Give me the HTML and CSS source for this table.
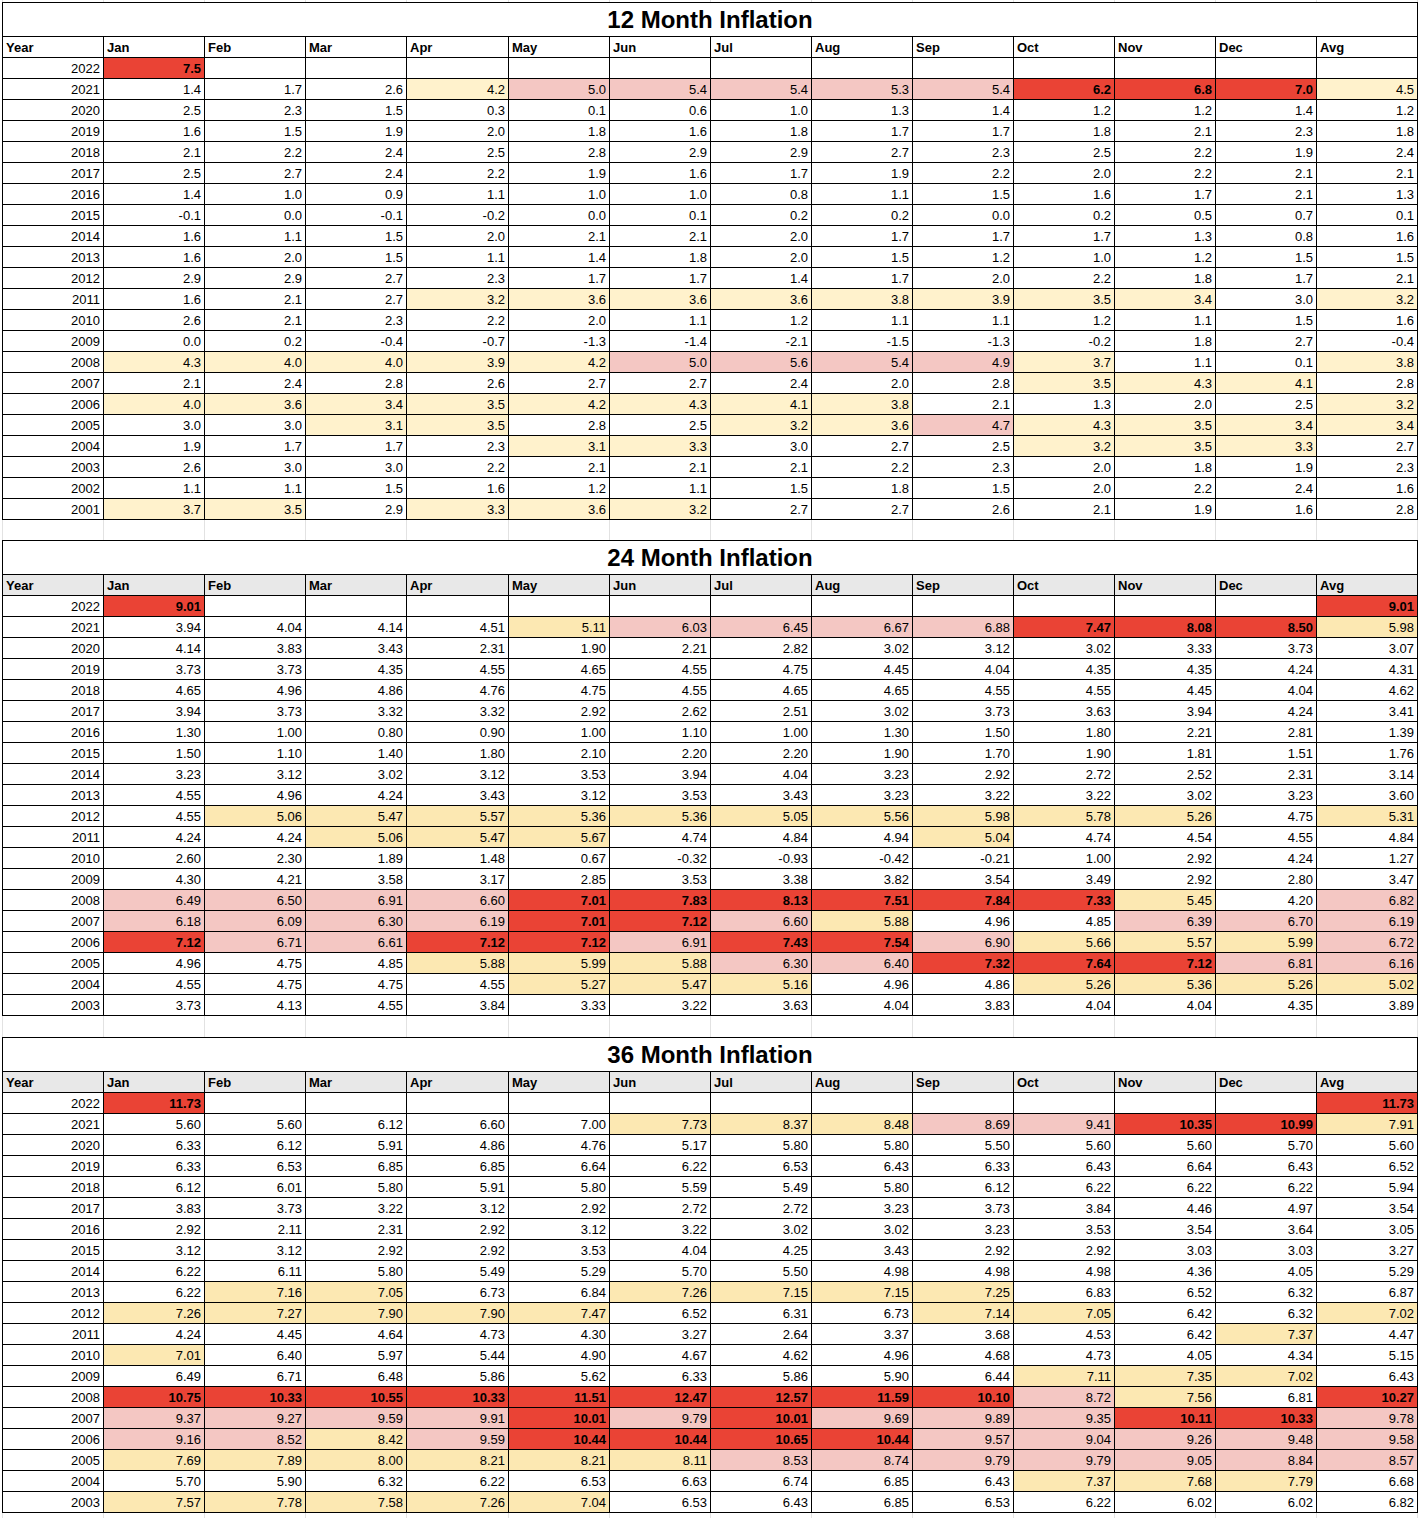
FILE: index.html
```html
<!DOCTYPE html>
<html lang="en">
<head>
<meta charset="utf-8">
<title>Inflation</title>
<link rel="stylesheet" href="styles.css">
</head>
<body>
<div class="sheet">
  <div class="grid gap gap-top" data-gap></div>
  <div class="grid tbl t1" id="t1"></div>
  <div class="grid gap gap-mid" data-gap></div>
  <div class="grid tbl t2" id="t2"></div>
  <div class="grid gap gap-mid gap-wide" data-gap></div>
  <div class="grid tbl t3" id="t3"></div>
  <div class="grid gap gap-end" data-gap></div>
</div>
<script src="script.js"></script>
</body>
</html>
```

FILE: styles.css
```css
body {
  margin: 0;
  background: #fff;
  color: #000;
  font-family: "Liberation Sans", Arial, sans-serif;
}

.sheet {
  padding-left: 2px;
}

.grid {
  display: grid;
  grid-template-columns: 101px 101px 101px 101px 102px repeat(9, 101px);
  width: max-content;
}

.gap {
  border-left: 1px solid #e2e2e2;
}

.gap > div {
  border-right: 1px solid #e2e2e2;
}

.gap-top > div { height: 2px; }
.gap-mid > div { height: 20px; }
.gap-wide > div { height: 21px; }
.gap-end > div { height: 8px; }

.tbl {
  border-left: 1px solid #000;
  border-top: 1px solid #000;
}

.cell {
  box-sizing: border-box;
  height: 21px;
  border-right: 1px solid #000;
  border-bottom: 1px solid #000;
  padding: 2px 3px 0;
  font-size: 13px;
  line-height: 18px;
  white-space: nowrap;
  overflow: hidden;
  text-align: right;
}

.title {
  grid-column: 1 / -1;
  box-sizing: border-box;
  height: 34px;
  border-right: 1px solid #000;
  border-bottom: 1px solid #000;
  font-size: 24px;
  font-weight: bold;
  line-height: 33px;
  text-align: center;
}

.head {
  font-weight: bold;
  text-align: left;
}

.t2 .head,
.t3 .head {
  background: #e8e8e8;
}

.red {
  background: #ea4335;
  font-weight: bold;
}

.pink {
  background: #f4c7c3;
}

.t1 .yellow {
  background: #fff2cc;
}

.t2 .yellow,
.t3 .yellow {
  background: #fce8b2;
}
```

FILE: script.js
```js
(function () {
  var heads = ["Year", "Jan", "Feb", "Mar", "Apr", "May", "Jun", "Jul", "Aug", "Sep", "Oct", "Nov", "Dec", "Avg"];

  var t1 = [
    "2022|7.5,,,,,,,,,,,,",
    "2021|1.4 1.7 2.6 4.2 5.0 5.4 5.4 5.3 5.4 6.2 6.8 7.0 4.5",
    "2020|2.5 2.3 1.5 0.3 0.1 0.6 1.0 1.3 1.4 1.2 1.2 1.4 1.2",
    "2019|1.6 1.5 1.9 2.0 1.8 1.6 1.8 1.7 1.7 1.8 2.1 2.3 1.8",
    "2018|2.1 2.2 2.4 2.5 2.8 2.9 2.9 2.7 2.3 2.5 2.2 1.9 2.4",
    "2017|2.5 2.7 2.4 2.2 1.9 1.6 1.7 1.9 2.2 2.0 2.2 2.1 2.1",
    "2016|1.4 1.0 0.9 1.1 1.0 1.0 0.8 1.1 1.5 1.6 1.7 2.1 1.3",
    "2015|-0.1 0.0 -0.1 -0.2 0.0 0.1 0.2 0.2 0.0 0.2 0.5 0.7 0.1",
    "2014|1.6 1.1 1.5 2.0 2.1 2.1 2.0 1.7 1.7 1.7 1.3 0.8 1.6",
    "2013|1.6 2.0 1.5 1.1 1.4 1.8 2.0 1.5 1.2 1.0 1.2 1.5 1.5",
    "2012|2.9 2.9 2.7 2.3 1.7 1.7 1.4 1.7 2.0 2.2 1.8 1.7 2.1",
    "2011|1.6 2.1 2.7 3.2 3.6 3.6 3.6 3.8 3.9 3.5 3.4 3.0 3.2",
    "2010|2.6 2.1 2.3 2.2 2.0 1.1 1.2 1.1 1.1 1.2 1.1 1.5 1.6",
    "2009|0.0 0.2 -0.4 -0.7 -1.3 -1.4 -2.1 -1.5 -1.3 -0.2 1.8 2.7 -0.4",
    "2008|4.3 4.0 4.0 3.9 4.2 5.0 5.6 5.4 4.9 3.7 1.1 0.1 3.8",
    "2007|2.1 2.4 2.8 2.6 2.7 2.7 2.4 2.0 2.8 3.5 4.3 4.1 2.8",
    "2006|4.0 3.6 3.4 3.5 4.2 4.3 4.1 3.8 2.1 1.3 2.0 2.5 3.2",
    "2005|3.0 3.0 3.1 3.5 2.8 2.5 3.2 3.6 4.7 4.3 3.5 3.4 3.4",
    "2004|1.9 1.7 1.7 2.3 3.1 3.3 3.0 2.7 2.5 3.2 3.5 3.3 2.7",
    "2003|2.6 3.0 3.0 2.2 2.1 2.1 2.1 2.2 2.3 2.0 1.8 1.9 2.3",
    "2002|1.1 1.1 1.5 1.6 1.2 1.1 1.5 1.8 1.5 2.0 2.2 2.4 1.6",
    "2001|3.7 3.5 2.9 3.3 3.6 3.2 2.7 2.7 2.6 2.1 1.9 1.6 2.8"
  ];

  var t2 = [
    "2022|9.01,,,,,,,,,,,,9.01",
    "2021|3.94 4.04 4.14 4.51 5.11 6.03 6.45 6.67 6.88 7.47 8.08 8.50 5.98",
    "2020|4.14 3.83 3.43 2.31 1.90 2.21 2.82 3.02 3.12 3.02 3.33 3.73 3.07",
    "2019|3.73 3.73 4.35 4.55 4.65 4.55 4.75 4.45 4.04 4.35 4.35 4.24 4.31",
    "2018|4.65 4.96 4.86 4.76 4.75 4.55 4.65 4.65 4.55 4.55 4.45 4.04 4.62",
    "2017|3.94 3.73 3.32 3.32 2.92 2.62 2.51 3.02 3.73 3.63 3.94 4.24 3.41",
    "2016|1.30 1.00 0.80 0.90 1.00 1.10 1.00 1.30 1.50 1.80 2.21 2.81 1.39",
    "2015|1.50 1.10 1.40 1.80 2.10 2.20 2.20 1.90 1.70 1.90 1.81 1.51 1.76",
    "2014|3.23 3.12 3.02 3.12 3.53 3.94 4.04 3.23 2.92 2.72 2.52 2.31 3.14",
    "2013|4.55 4.96 4.24 3.43 3.12 3.53 3.43 3.23 3.22 3.22 3.02 3.23 3.60",
    "2012|4.55 5.06 5.47 5.57 5.36 5.36 5.05 5.56 5.98 5.78 5.26 4.75 5.31",
    "2011|4.24 4.24 5.06 5.47 5.67 4.74 4.84 4.94 5.04 4.74 4.54 4.55 4.84",
    "2010|2.60 2.30 1.89 1.48 0.67 -0.32 -0.93 -0.42 -0.21 1.00 2.92 4.24 1.27",
    "2009|4.30 4.21 3.58 3.17 2.85 3.53 3.38 3.82 3.54 3.49 2.92 2.80 3.47",
    "2008|6.49 6.50 6.91 6.60 7.01 7.83 8.13 7.51 7.84 7.33 5.45 4.20 6.82",
    "2007|6.18 6.09 6.30 6.19 7.01 7.12 6.60 5.88 4.96 4.85 6.39 6.70 6.19",
    "2006|7.12 6.71 6.61 7.12 7.12 6.91 7.43 7.54 6.90 5.66 5.57 5.99 6.72",
    "2005|4.96 4.75 4.85 5.88 5.99 5.88 6.30 6.40 7.32 7.64 7.12 6.81 6.16",
    "2004|4.55 4.75 4.75 4.55 5.27 5.47 5.16 4.96 4.86 5.26 5.36 5.26 5.02",
    "2003|3.73 4.13 4.55 3.84 3.33 3.22 3.63 4.04 3.83 4.04 4.04 4.35 3.89"
  ];

  var t3 = [
    "2022|11.73,,,,,,,,,,,,11.73",
    "2021|5.60 5.60 6.12 6.60 7.00 7.73 8.37 8.48 8.69 9.41 10.35 10.99 7.91",
    "2020|6.33 6.12 5.91 4.86 4.76 5.17 5.80 5.80 5.50 5.60 5.60 5.70 5.60",
    "2019|6.33 6.53 6.85 6.85 6.64 6.22 6.53 6.43 6.33 6.43 6.64 6.43 6.52",
    "2018|6.12 6.01 5.80 5.91 5.80 5.59 5.49 5.80 6.12 6.22 6.22 6.22 5.94",
    "2017|3.83 3.73 3.22 3.12 2.92 2.72 2.72 3.23 3.73 3.84 4.46 4.97 3.54",
    "2016|2.92 2.11 2.31 2.92 3.12 3.22 3.02 3.02 3.23 3.53 3.54 3.64 3.05",
    "2015|3.12 3.12 2.92 2.92 3.53 4.04 4.25 3.43 2.92 2.92 3.03 3.03 3.27",
    "2014|6.22 6.11 5.80 5.49 5.29 5.70 5.50 4.98 4.98 4.98 4.36 4.05 5.29",
    "2013|6.22 7.16 7.05 6.73 6.84 7.26 7.15 7.15 7.25 6.83 6.52 6.32 6.87",
    "2012|7.26 7.27 7.90 7.90 7.47 6.52 6.31 6.73 7.14 7.05 6.42 6.32 7.02",
    "2011|4.24 4.45 4.64 4.73 4.30 3.27 2.64 3.37 3.68 4.53 6.42 7.37 4.47",
    "2010|7.01 6.40 5.97 5.44 4.90 4.67 4.62 4.96 4.68 4.73 4.05 4.34 5.15",
    "2009|6.49 6.71 6.48 5.86 5.62 6.33 5.86 5.90 6.44 7.11 7.35 7.02 6.43",
    "2008|10.75 10.33 10.55 10.33 11.51 12.47 12.57 11.59 10.10 8.72 7.56 6.81 10.27",
    "2007|9.37 9.27 9.59 9.91 10.01 9.79 10.01 9.69 9.89 9.35 10.11 10.33 9.78",
    "2006|9.16 8.52 8.42 9.59 10.44 10.44 10.65 10.44 9.57 9.04 9.26 9.48 9.58",
    "2005|7.69 7.89 8.00 8.21 8.21 8.11 8.53 8.74 9.79 9.79 9.05 8.84 8.57",
    "2004|5.70 5.90 6.32 6.22 6.53 6.63 6.74 6.85 6.43 7.37 7.68 7.79 6.68",
    "2003|7.57 7.78 7.58 7.26 7.04 6.53 6.43 6.85 6.53 6.22 6.02 6.02 6.82"
  ];

  function c1(v) { return v >= 6 ? "red" : v >= 4.55 ? "pink" : v >= 3.05 ? "yellow" : ""; }
  function c2(v) { return v >= 7 ? "red" : v >= 6 ? "pink" : v >= 5 ? "yellow" : ""; }
  function c3(v) { return v >= 10 ? "red" : v >= 8.5 ? "pink" : v >= 7.005 ? "yellow" : ""; }

  function cell(parent, text, cls) {
    var d = document.createElement("div");
    d.className = cls;
    d.textContent = text;
    parent.appendChild(d);
  }

  function build(id, title, rows, classify) {
    var el = document.getElementById(id);
    cell(el, title, "title");
    heads.forEach(function (h) { cell(el, h, "cell head"); });
    rows.forEach(function (r) {
      var parts = r.split("|");
      var vals = parts[1].indexOf(",") >= 0 ? parts[1].split(",") : parts[1].split(" ");
      cell(el, parts[0], "cell");
      vals.forEach(function (v) {
        var cls = "cell";
        if (v !== "") {
          var k = classify(parseFloat(v));
          if (k) cls += " " + k;
        }
        cell(el, v, cls);
      });
    });
  }

  build("t1", "12 Month Inflation", t1, c1);
  build("t2", "24 Month Inflation", t2, c2);
  build("t3", "36 Month Inflation", t3, c3);

  document.querySelectorAll("[data-gap]").forEach(function (g) {
    for (var i = 0; i < 14; i++) {
      g.appendChild(document.createElement("div"));
    }
  });
})();
```
